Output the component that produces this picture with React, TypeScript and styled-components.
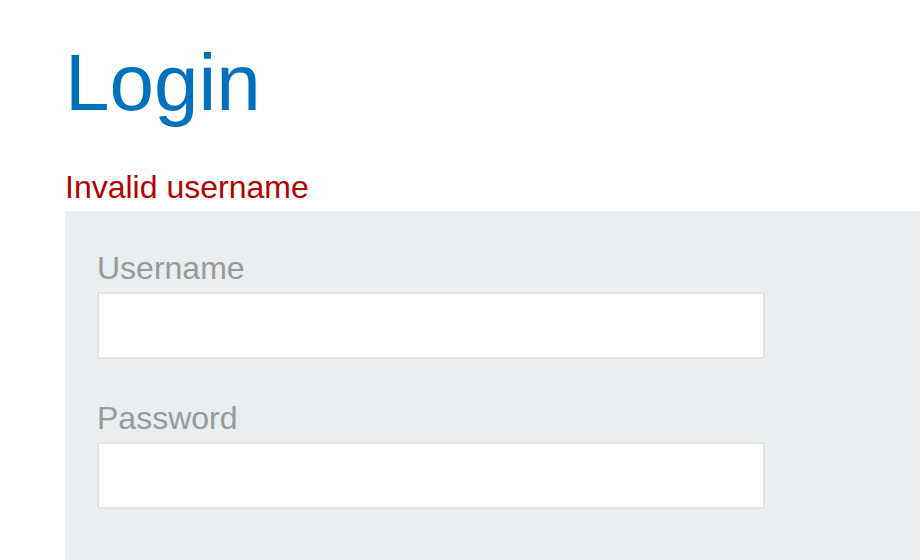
import { FC } from 'react';
import styled, { createGlobalStyle } from 'styled-components';

const GlobalStyle = createGlobalStyle`
  html, body {
    margin: 0;
    padding: 0;
    background: #fff;
    overflow: hidden;
  }
  body {
    font-family: "Liberation Sans", Arial, sans-serif;
  }
`;

const Page = styled.div`
  display: flex;
  flex-direction: column;
  padding-left: 65px;
  height: 560px;
`;

const Title = styled.h1`
  margin: 37px 0 40px 0;
  font-size: 80px;
  font-weight: 400;
  line-height: 92px;
  color: #0071bc;
`;

const ErrorText = styled.div`
  font-size: 32px;
  line-height: 36px;
  color: #b50000;
  margin-bottom: 6px;
`;

const Panel = styled.form`
  flex: 1;
  display: flex;
  flex-direction: column;
  background: #e9eef1;
  padding: 40px 0 0 32px;
`;

const Field = styled.div<{ $gap?: number }>`
  display: flex;
  flex-direction: column;
  width: 668px;
  margin-bottom: ${(p) => p.$gap ?? 0}px;
`;

const Label = styled.label`
  font-size: 32px;
  line-height: 34px;
  color: #999;
  margin-bottom: 7px;
`;

const Input = styled.input`
  box-sizing: border-box;
  height: 67px;
  width: 100%;
  border: 2px solid #e3e3e3;
  background: #fff;
  font-size: 24px;
  padding: 0 12px;
  outline: none;
`;

// -------------------------------------------------------------

const App: FC = () => {
  return (
    <>
      <GlobalStyle />
      <Page>
        <Title>Login</Title>
        <ErrorText>Invalid username</ErrorText>
        <Panel onSubmit={(e) => e.preventDefault()}>
          <Field $gap={42}>
            <Label htmlFor="username">Username</Label>
            <Input id="username" type="text" />
          </Field>
          <Field>
            <Label htmlFor="password">Password</Label>
            <Input id="password" type="password" />
          </Field>
        </Panel>
      </Page>
    </>
  );
};

export default App;
